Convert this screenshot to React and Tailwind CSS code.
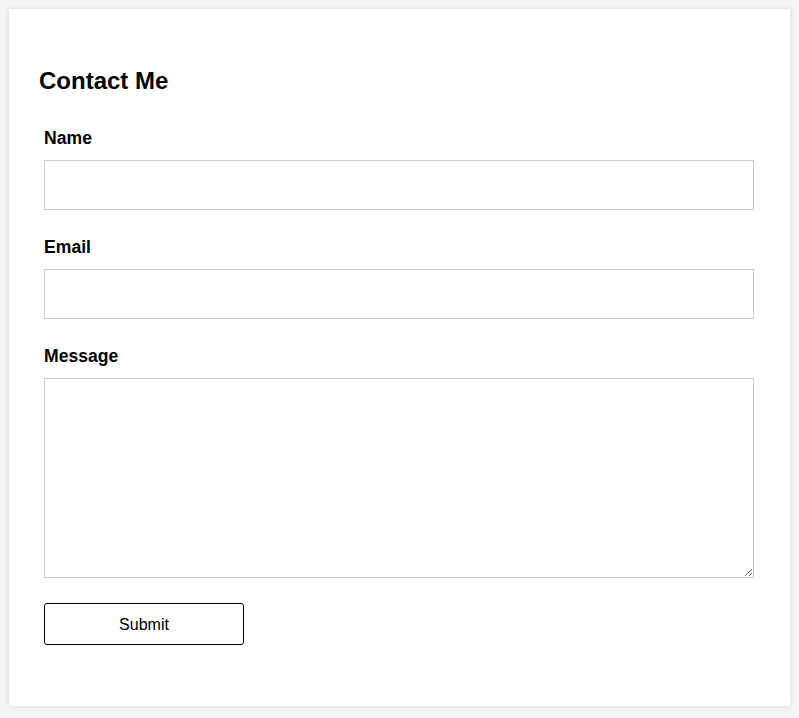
import React from 'react';

const fields = [
  { id: 'name', label: 'Name', type: 'text' },
  { id: 'email', label: 'Email', type: 'email' },
];

const App = () => {
  return (
    <div className="min-h-[718px] bg-[#f4f4f4] p-[9px] font-['Liberation_Sans',Arial,sans-serif] text-black">
      <div className="bg-white pl-[30px] pr-[30px] pt-[58px] pb-[61px] shadow-[0_0_5px_rgba(0,0,0,0.12)]">
        <h2 className="text-[24px] font-bold leading-[28px]">Contact Me</h2>

        <form className="mt-[32px] pl-[5px] pr-[6px]" onSubmit={(e) => e.preventDefault()}>
          {fields.map((f) => (
            <div key={f.id} className="mb-[26px]">
              <label htmlFor={f.id} className="block text-[17.6px] font-bold leading-[20px] pt-[1px] mb-[12px]">
                {f.label}
              </label>
              <input
                id={f.id}
                type={f.type}
                className="block w-full h-[50px] border border-[#cccccc] bg-white px-2 outline-none"
              />
            </div>
          ))}

          <div className="mb-[25px]">
            <label htmlFor="message" className="block text-[17.6px] font-bold leading-[20px] pt-[1px] mb-[12px]">
              Message
            </label>
            <textarea
              id="message"
              className="block w-full h-[200px] border border-[#cccccc] bg-white p-2 outline-none resize-y"
            />
          </div>

          <button
            type="submit"
            className="block w-[200px] h-[42px] pt-[2px] border border-black rounded-[3px] bg-white text-[16px] text-black"
          >
            Submit
          </button>
        </form>
      </div>
    </div>
  );
};

export default App;
